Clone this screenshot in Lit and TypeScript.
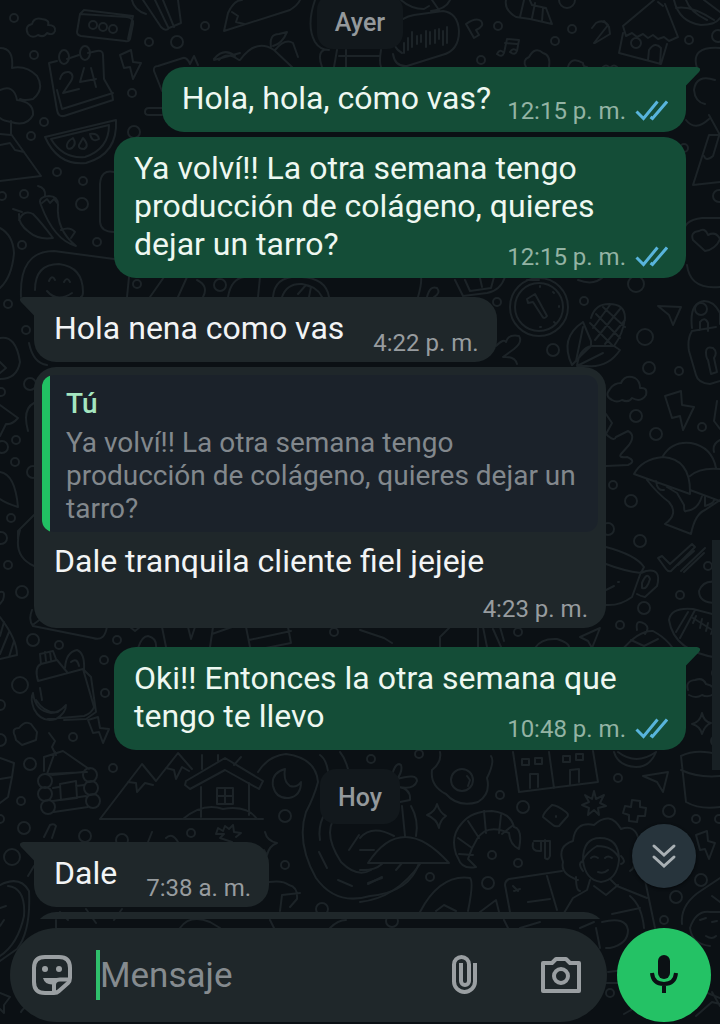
import { LitElement, html, svg, css, nothing } from "lit";
import { customElement, property } from "lit/decorators.js";

interface Message {
  id: string;
  kind: "msg";
  from: "me" | "them";
  text: string;
  time: string;
  tail?: boolean;
  quote?: { author: string; text: string };
}
interface Day {
  id: string;
  kind: "day";
  label: string;
}

const FEED: (Message | Day)[] = [
  { id: "d1", kind: "day", label: "Ayer" },
  { id: "m1", kind: "msg", from: "me", text: "Hola, hola, cómo vas?", time: "12:15 p. m.", tail: true },
  {
    id: "m2",
    kind: "msg",
    from: "me",
    text: "Ya volví!! La otra semana tengo producción de colágeno, quieres dejar un tarro?",
    time: "12:15 p. m.",
  },
  { id: "m3", kind: "msg", from: "them", text: "Hola nena como vas", time: "4:22 p. m.", tail: true },
  {
    id: "m4",
    kind: "msg",
    from: "them",
    text: "Dale tranquila cliente fiel jejeje",
    time: "4:23 p. m.",
    quote: {
      author: "Tú",
      text: "Ya volví!! La otra semana tengo producción de colágeno, quieres dejar un tarro?",
    },
  },
  { id: "m5", kind: "msg", from: "me", text: "Oki!! Entonces la otra semana que tengo te llevo", time: "10:48 p. m.", tail: true },
  { id: "d2", kind: "day", label: "Hoy" },
  { id: "m6", kind: "msg", from: "them", text: "Dale", time: "7:38 a. m.", tail: true },
];

/* Small bubbles scattered between the doodles: x, y, radius. */
const DOTS: [number, number, number][] = [
  [14, 18, 4], [34, 55, 4], [149, 42, 4], [177, 42, 6], [205, 26, 4], [132, 93, 4], [44, 122, 4], [31, 136, 4],
  [134, 132, 6], [57, 172, 4], [83, 181, 4], [24, 194, 4], [82, 204, 6], [97, 242, 4], [22, 245, 4], [2, 196, 4],
  [498, 26, 4], [555, 41, 4], [572, 29, 4], [481, 60, 4], [567, 0, 8], [689, 40, 4], [718, 36, 6], [684, 148, 4],
  [719, 196, 6], [636, 284, 8], [497, 302, 4], [584, 301, 4], [553, 350, 6], [701, 309, 6], [645, 337, 8], [649, 368, 6],
  [679, 371, 4], [636, 416, 6], [656, 434, 6], [702, 427, 4], [613, 485, 4], [631, 501, 6], [608, 529, 6], [8, 304, 4],
  [26, 330, 4], [30, 384, 6], [1, 392, 4], [16, 440, 4], [2, 447, 6], [15, 462, 4], [33, 472, 6], [11, 518, 4],
  [1, 538, 6], [8, 565, 4], [22, 592, 6], [33, 640, 6], [59, 645, 4], [117, 640, 4], [104, 660, 4], [20, 685, 8],
  [105, 693, 4], [0, 705, 5], [73, 737, 4], [30, 764, 6], [113, 768, 4], [0, 740, 6], [137, 284, 4], [220, 285, 6],
  [640, 541, 6], [708, 566, 4], [680, 595, 4], [644, 608, 6], [620, 625, 4], [518, 632, 4], [334, 632, 4], [717, 673, 5],
  [716, 741, 5], [618, 778, 4], [419, 754, 4], [371, 759, 4], [500, 795, 4], [523, 807, 6], [669, 811, 6], [696, 819, 4],
  [719, 819, 4], [21, 801, 4], [24, 828, 6], [12, 857, 8], [85, 836, 6], [122, 840, 6], [191, 833, 4], [285, 816, 6],
  [285, 865, 4], [322, 909, 6], [492, 855, 4], [518, 863, 4], [488, 883, 6], [430, 877, 4], [701, 880, 6], [676, 897, 6],
  [664, 920, 4], [610, 993, 4], [392, 921, 6], [0, 819, 4],
];

/* Line doodles of the wallpaper. */
const STROKES: string[] = [
  // cloud, speech card
  "M28 34q-4-8 4-10q2-7 10-5q8 1 6 6q8 0 7 6q-2 5-8 2q-3 5-9 2q-6 4-10-1z",
  "M80 14l47 3q7 1 6 7l-3 15q-1 3-5 2l-44-5q-4-1-4-4zM80 14l4-4 49 6-5 23",
  "M89 25a4 4 0 1 0 8 0a4 4 0 1 0-8 0M99 27a4 4 0 1 0 8 0a4 4 0 1 0-8 0M109 29a4 4 0 1 0 8 0a4 4 0 1 0-8 0",
  // books and shoe
  "M132 0q2 10 14 14M143 0l18 27q5 5 8 1l12-5-3-23M155 0l13 27M163 0l11 27M224 31l4-18q6-13 14-13M224 31l66-21q8-5 10-10M232 12l6 4-2 6 8 2",
  // calendar
  "M57 61l-8 2 8 47q1 7 7 6l49-16-1-7-8-14-1-24q0-5-6-4l-9 2M67 59l12-4M57 90l5 19 51-16",
  "M59 57a5 7 0 1 0 10 0a5 7 0 1 0-10 0M80 53a5 7 0 1 0 10 0a5 7 0 1 0-10 0",
  "M60 79q2-8 9-7q7 3 0 12l-6 9 16-4M84 68l-4 14 16-3M91 68l5 19",
  // bolt
  "M120 55l11-5 2 12 8 1-8 16-3-12-6 1z",
  // flower, mountain
  "M0 48q14 0 12 20q14-3 25 8q8 13-4 23q-9 2-13 0M0 90q14-6 17 10q17 2 16 15q-6 12-22 7q-8-1-11-4M11 121v13l30 42-41 5M0 145l10-2 5 7 9 2M0 134l11 1",
  // melon slice
  "M45 137l71-17q2 34-30 43q-28 3-41-26zM51 139l58-14q0 24-24 32q-22 2-34-18",
  "M67 147q-1-5 6-9q4 6-1 10q-4 2-5-1M79 145l4-7q7 8 1 11q-6 0-5-4M90 134q8-1 9 5q-7 4-9-5",
  // chillies
  "M41 205q-4-8 8-9q9 0 9 9q-2 25 18 41q-22-6-35-41zM19 214q-1 10 10 18q9 8 24 6q-12-16-20-24q-9-5-14 6M13 209l9 3M38 186q8 2 7 10M42 203l5-4 3 4 4-4 4 5M61 230q9-4 14 2l-4 6",
  // card behind the messages
  "M114 172q-13-3-14 12v38q1 10 14 10",
  "M154 71q-1-5 4-5l25-8q4-1 7 6l4-8 4 9M154 71l8 20M163 108h-14q-4 0-4 4q0 3 4 3h13",
  // smiling blob
  "M21 297q-2-46 33-46l60 8M35 290q0-26 24-26q24 3 24 28q0 4-2 5M49 281q3-7 6-1M64 282q3-6 6 0M47 291q10 12 25 2M0 228q13 7 14 25q-2 24-14 35M127 297l2-20M150 297l14-20M178 297l9-20M197 280q12 6 6 17M228 297q3-18 16-20M258 297l2-20M273 297q2-22 28-20q25 1 28 20M282 297q5-14 20-13q15 2 20 13M298 294l8-9 5 2-2 10",
  // island
  "M214 60l26-7M219 60q8-9 20 0M240 60q16-22 34-10l18 17M271 47q-2-13 8-13l8-2q-5 12-14 14M275 50q10-12 18-7l5 14M214 59q10-12 21-3",
  // frame round the day label
  "M315 0q-9 26 0 42q5 8 14 8M322 67q-5-14 2-17M334 67l3-17M339 56h40M381 67q-2-5 0-17M346 50v17",
  // voice note
  "M402 53q-12-6-8-26q8-10 20-12l29-4q15 2 16 20q0 20-17 24l-35 11q-12 1-14-12M404 43v10M408 38v12M412 32v15M417 36v8M421 35v7M426 31v16M430 32v12M435 30v13M439 29v10M443 31v14M447 27v16M401 0q10 9 23 9l5-3M431 11q15-2 19-11M432 0l7 10",
  // music and key icons
  "M466 24l8 14 5-3-3-5q9-4 5-9q-5-4-15 3zM592 28l4-5q7-4 12 2l-14 18M604 21l5 6 1 7-15 9M497 54q3-6 7-1q-2 5-7 1M510 52q3-5 7-1q-2 5-7 1M504 53l3-14 12 1-2 11M505 43l12 1",
  "M506 0q-2 10 10 17l14 2 22 5-6-16-14-3-4-9M520 17l4-17M532 18l3-15M542 21l1-13",
  // shop
  "M623 26l31-26M623 26l3 10 6-3 5 4 6-3 5 4 5-3 5 4 6-2 5 4 9-4-13-33M623 33l-4 20 42 11 6-20M631 43a5 5 0 1 0 10 0a5 5 0 1 0-10 0M648 60l1-10q6-9 12-2l-1 16M658 2l5 4",
  "M674 0q5 22 27 25q15 0 19-7M676 8q15-3 38 12M686 0q4 12 21 20M704 0l16 12",
  // clouds on the right
  "M526 67q-4-7 3-10q6-11 14-4q8 2 6 14M568 67q3-11 15-4q0 4 4 4M603 67q3-3 6 0M611 67q3-3 6 0",
  "M697 68q-7-22 23-20M715 80q-19-6-21 10q1 12 11 14M686 120q9 12 23-1M709 115l11 20h-11l-16 50 27-3M704 156q2 6 9 0l6-20M684 235q-2-15 18-17l18 0M687 265q3 25 33 22M693 240q-3-8 6-9q6-4 9 4q8-4 12 4q-4 10-15 12z",
  // things under the second message
  "M418 297q4-14 3-20M427 297q3-12 10-9q4 5-3 9M455 280l8 16 24-3q13-2 18-16M465 280l5 11 21-3 3-11M480 278l2 9M515 277q17-5 35 0M527 280h12M578 280q16 6 25-3",
  // clock
  "M510 307a29 29 0 1 0 58 0a29 29 0 1 0-58 0M515 307a24 24 0 1 0 48 0a24 24 0 1 0-48 0M527 299l8-5 12 22q-3 4-5 0l-9-14-5 1zM540 286v1M553 292l1 1M559 306v1M554 322l1 1M540 327h1",
  // corn
  "M591 341l-8-19q-24 16-11 43q8-9 19-19zM577 366q2-17 14-20h23l6 4q-12 18-33 16zM577 366l26-13M576 361l7-34M591 318q4-14 18-14q16 0 16 14q-2 16-11 28M596 314l24 24M603 307l22 20M590 323l22 22M610 305l-17 23M620 309l-25 31M625 320l-20 24",
  // paper plane, padlock
  "M658 306l23 1-8 18-4-10z",
  "M692 328q-3-25 12-27q10 0 16 12v11M700 330v-8q5-6 8 1v8M692 331l24-4M692 331q-5 8-3 20l7 24q2 8 14 9l10-3M706 352q0-6 7-4q5 4 1 10l3 14-6 2-3-14q-2-2-2-8",
  // leaves beside the replies
  "M496 346q8-8 10-4q2-8 13-6q4 6-5 13l-11 8q12-1 14 7M606 414l6 9-6 11M606 434q8 8 10 3l12-6q8 4 1 14l-8 9q-3 4 6 3q10 4 1 8l-22 1",
  // cloud, bolt
  "M612 400q-8-4-2-11q4-6 11-6q4-9 14-5q5 3 5 10q8-1 6 7q-5 8-14 3q-3 5-10 2q-5 3-10 0z",
  "M665 396l16-5 1 14 12 2-11 23-3-14-8 2z",
  "M717 401l-3 20 6 8M720 440q-8 4-6 12",
  // mushrooms
  "M634 474q8-15 29-17q28 2 27 37zM663 456q9-15 28-13q21 4 25 25M690 476q10-9 30-7M690 490l30 11M647 480q11 14 22 22q10 12-4 22l26 10q4-20 14-24l15-10M656 481q1 10 8 9M667 487l10 6 7 12q0 8 2 6q12-1 16-15M705 496v10q10-3 9-7",
  // cup
  "M606 547q30 8 38 20l-3 6q-17-2-35-9M641 573l5-2q16-3 11 15l-12 11q-5-1-8-3M642 583q5-12 8-4q-3 11-8 9zM606 605q14 1 26-8l9-25M618 582h1M606 590l8-4",
  // check marks
  "M658 558l4-2 8 8 22-20 3 3-24 24q-3 1-5-2zM678 565l16-14M681 571l24-23M684 572l20-19",
  // ball
  "M669 620q2-13 24-11l27 7M669 620q5 32 50 38M676 632l12-20M680 638l15-28M693 618l24 15M696 616l-3 7M702 619l-2 9M708 623l-2 8M714 626l-3 8M720 583q-16-5-21 8q0 12 17 12",
  "M580 637l20-9-8 20-4-7zM622 650q17-20 31-19l5 3q8 5 14 13M637 630q-2-12 8-6q5 4 0 10M631 640l13 6 14-7M535 648q6-10 22-9q13 4 12 9",
  // side doodles on the left
  "M0 338q16-3 20 24q-3 17-20 17M0 362l6 6-6 5M0 405l18 13q-6 7-12 6l-6 12M34 403q-12 6-6 28M29 343q4 20 18 22M0 472q15 2 18 35q-12-4-18-8M20 530q-8 26 14 36M34 515l-16 16v8M0 592q6-2 3 8l-3 4M0 617q17 22 17 38l-17 4M4 622l-4 14M9 632l-9 22M14 641l-5 16",
  "M32 610q-4 10 1 16l60 12q12 4 14-12M34 624l8-6M130 627l5 4 5-4M138 648q4-12 10-12q9 2 8 12M162 627l4 20M188 627l3 12 4-12M213 627l-3 20M212 634l20-7M246 627l4 20M249 640l42-9M288 627l3 16-41 8M360 630l24 8 8 5M440 647v-10l10-10M478 627v20M483 627l4 20M493 629l8 18M500 627l4 14",
  // jug with banana
  "M38 681l45-12 11 38q-2 6-10 9l-36 3M38 681q-4-14 3-17l16-4 10 12M41 664l-1-10 13-3 3 8M45 652l1 9M50 652l1 8M65 668q1-16 12-18q8 3 7 20M71 662q6-5 8 4M83 669l8 8 5 35-10 7-22 1M33 693q2 18 18 20q8 0 15-8q0 8-10 14q-15 4-22-10q-4-10-1-16zM36 700q9 14 22 12M42 700l-2-12",
  "M15 736q-4-8 4-8q6-8 12-4l6 8-1 8-14 5-6-5zM88 720l10-3 2 11 9 1-6 14-4-11-6 1zM49 733l6 8-3 6 4 8",
  // log cabin
  "M44 757l19-6 26 18M44 757v14M55 752l-8 22 40-2M38 781a7 7 0 1 0 14 0a7 7 0 1 0-14 0M38 794a7 7 0 1 0 14 0a7 7 0 1 0-14 0M41 807a7 7 0 1 0 14 0a7 7 0 1 0-14 0M83 775a7 7 0 1 0 14 0a7 7 0 1 0-14 0M84 788a7 7 0 1 0 14 0a7 7 0 1 0-14 0M86 801a7 7 0 1 0 14 0a7 7 0 1 0-14 0M52 775l31-3M53 788l6-1M53 801l33-5M60 784l16-3 1 17-16 2zM76 786l8-1M54 812l34-5",
  "M0 758l14 5-2 14-12 2M12 777l-4 20-8 6",
  // mountains and house
  "M100 819l42-55 14 17 22-28 14 16M100 819h163M128 782l8 1 1 9 8-9 8 2M166 768l8 2 2 9 6-12 7 4",
  "M186 781l39-23 38 23-4 8-34-19-35 19-5-4zM201 787v30M249 783v32M183 819q20-17 40-10q24-4 34 10M217 788h16v16h-16zM225 788v16M217 796h16M202 755v14M218 755v6",
  // moon
  "M285 769q-14 4-12 17q3 13 16 12q12-2 12-16q-4 6-11 4q-7-5-5-17zM258 772q10-16 28-18q30 4 32 28q-4 15-12 30q-10 30 10 66q20 28 54 18q40-4 49-33M341 812q-22 16 0 50q16 16 30 8M320 755q6 4 8 16M340 752q5 6 8 17M234 765l7-8",
  "M320 840q-2-12 3-23M319 852l8 16M338 880l14 6M368 883l14-5M349 850l10-15",
  // egg, rabbit, building
  "M432 770q10-8 8-18M432 770q-2 16 14 24q12 14 32 8q13-8 9-24q8-16 4-22M451 780a11 11 0 1 0 22 0a11 11 0 1 0-22 0M467 776l3 4-2 6M392 775q4-14 9-10q2 6-4 14q20-6 20 2q-3 9-18 6q12 2 11 13l-10 2M513 752l6 40 79-10-5-31M549 752l5 36M530 788v-14h8v13M570 784v-14l9-1v13M522 759h7v6h-7zM535 758h7v6h-7zM563 756h7v6h-7zM576 754h7v6h-7z",
  // basket plus jar on the right
  "M614 752q4 14 22 15q14 0 20-15M618 752q18 14 38 0M643 776l25-4-5 20-6-10zM681 756q16-8 39-1M681 756l5 46q14 8 34 5M681 770q17 8 39 6M688 690q-3-9 7-10q8-3 11 4q10 2 8 10q-6 4-12 1q-6 4-13 0M702 713q2 9 9 10q-6 2-9 11q-2-8-10-10q8-2 10-11",
  // umbrella, croissant
  "M368 863q34-52 81 0zM360 838q12-14 34-2M360 850h14M360 870q14 1 22-6M402 806l3 30M411 806q8 14 5 30M360 902q36-4 60-38M396 870l6-7M368 884l14-7",
  "M437 804q3 9 9 12q-6 4-7 12q-2-9-12-13q8-3 10-11z",
  "M456 854q-6-18 6-31q10-12 30-12q19 2 22 16q9 2 5 22q-9-4-10-16q-22-10-32 6q-6 10-9 20q4 4 8 8q-14 3-18-9zM468 821l11 17M484 811l2 22M501 815l-2 18M512 826l-10 8M458 838l14 10M459 854l14 1",
  // dice, star, cross, pilcrow
  "M552 805q5 0 14 7q4 3 0 6l-7 8q-4 1-6-1l-10-8q0-4 9-12M556 816v1",
  "M594 791l2 8 8-4-4 8 6 3-8 2 1 7-5-5-6 5 1-7-7-3 7-3-4-7 7 4z",
  "M632 800l8 1 0 6 6 1-1 8-7 0-1 6-8-1 0-6-6-2 2-7 6 1z",
  "M534 841h16v15q-2 5-5 2v-18M541 842v9q-10 1-8-8",
  // portrait
  "M578 880q-18-6-15-18q-6-16 10-21q2-20 21-16q16-15 27 4q15-5 18 12l-3 12M583 860q0-22 17-22q19 0 19 22q-2 20-18 22q-16-2-18-22zM583 860q4-8 14-14q16 0 22 12M591 858q3-3 7 0M605 858q3-3 7 0M598 872q6 2 10-2M621 856q6 6 0 8M583 871q-6-8 0-10M590 880l-3 10-14 8-12 20M611 880l6 6 30 12M594 886l12 9 12-10M645 880l10 48M630 896q12 10 14 32M612 914l28-6M596 928l4 20M602 922q24-6 26 8q0 14-18 18h-4M580 928l14-6M576 877q0 14 4 14M630 871q6-4 3-9",
  // bolt and balloon face
  "M696 835l11-4 1 10 7 2-6 16-4-10-5 1z",
  "M682 924q-2-20 20-34l18-12M690 928q6-18 20-16h10M690 928q2 16 20 18M700 920l6-2M712 922l5-1M706 936q6 4 10 0M712 896l8 6",
  // sails and board
  "M420 912q20-38 50-34q4 4-2 33M436 911l8-6 12 6M480 912l16-12 3 12M510 912l-5-27q0-4 4-6l53-8M547 876l10 34M514 891l6-2M513 886l5 5M528 902l22-3M504 920l4 8M520 928l20-6",
  // sparkles near the last bubble
  "M265 832q2 9 12 11q-8 3-10 12l-3-5M232 842l-12-4 4-4-8 0 2-6 5 3 2-5 4 3 4-4 1 7 7 1-5 4M44 837l6-12q4-2 6 1l-4 12M148 842l4-10M166 838q6-6 12 4",
  "M0 885q20-10 29 6q2 40-12 58l-17 12M8 886q18 2 16 30q-6 28-24 40M0 908l6-2M0 926l4-6M34 866l-6 10M0 993l10 4-6 8 0 8-4-4M21 1012q4-8 14-4M269 882q14-2 20 3q9 2 8 14l-7 8M300 893l-18 2-2 16M60 912l8 8M86 909l10 14M114 920l8-11M180 928q10-14 30-6l10 6M270 920l4 8M330 928q8-8 16-8M56 920v8",
  "M608 972l16-2M606 983h12M624 1014l14-8M700 990l20 8M696 1016l16-14 8 2M712 992l8 14",
];

@customElement("chat-wallpaper")
export class ChatWallpaper extends LitElement {
  static styles = css`
    :host {
      display: block;
      overflow: hidden;
    }
    .art {
      display: block;
      width: 100%;
      height: 100%;
      fill: none;
      stroke: #1c2327;
      stroke-width: 2;
      stroke-linecap: round;
      stroke-linejoin: round;
    }
  `;
  render() {
    return html`<svg class="art" viewBox="0 0 720 1024" preserveAspectRatio="xMidYMin slice" aria-hidden="true">
      ${DOTS.map(([x, y, r]) => svg`<circle cx=${x} cy=${y} r=${r}></circle>`)}
      ${STROKES.map((d) => svg`<path d=${d}></path>`)}
    </svg>`;
  }
}

@customElement("chat-bubble")
export class ChatBubble extends LitElement {
  @property({ attribute: false }) message!: Message;

  static styles = css`
    :host {
      display: flex;
    }
    .bubble {
      position: relative;
      display: flow-root;
      box-sizing: border-box;
      max-width: calc(100% - 80px);
      padding: 12px 18px 6px 20px;
      border-radius: 22px;
      font-size: 32px;
      line-height: 38px;
    }
    .me {
      margin-left: auto;
      background: #144d37;
      color: #eef8f1;
    }
    .them {
      padding-bottom: 4px;
      background: #1f272a;
      color: #f2f4f5;
    }
    .me.tailed {
      border-top-right-radius: 0;
    }
    .them.tailed {
      border-top-left-radius: 0;
    }
    .quoted {
      padding-top: 8px;
    }
    .tail {
      position: absolute;
      top: 0;
      width: 14px;
      height: 19px;
    }
    .me .tail {
      left: 100%;
      fill: #144d37;
    }
    .them .tail {
      right: 100%;
      fill: #1f272a;
      transform: scaleX(-1);
    }
    .quote {
      margin: 0 -10px 10px -12px;
      padding: 13px 16px 7px 24px;
      border-radius: 12px;
      background: linear-gradient(to right, #21c063 8px, #1b222a 8px);
      color: #82888d;
      font-size: 28px;
      line-height: 33px;
    }
    .author {
      display: block;
      margin-bottom: 6px;
      color: #a5e6c0;
      font-size: 28px;
      font-weight: 500;
      line-height: 32px;
    }
    .meta {
      float: right;
      display: flex;
      align-items: center;
      gap: 9px;
      margin: 17px 0 0 16px;
      font-size: 24px;
      line-height: 30px;
      white-space: nowrap;
    }
    .me .meta {
      color: #93b3a4;
    }
    .them .meta {
      margin: 19px 0 0 29px;
      color: #979c9f;
    }
    .quoted .meta {
      margin-top: 14px;
    }
    .ticks {
      width: 33px;
      height: 22px;
      fill: none;
      stroke: #58b4dc;
      stroke-width: 3;
    }
  `;

  render() {
    const m = this.message;
    const cls = ["bubble", m.from, m.tail ? "tailed" : "", m.quote ? "quoted" : ""].join(" ");
    return html`<article class=${cls}>
      ${m.tail
        ? html`<svg class="tail" viewBox="0 0 14 19" aria-hidden="true"><path d="M0 0H11Q16 1 13 5L0 18.500Z" /></svg>`
        : nothing}
      ${m.quote
        ? html`<div class="quote"><span class="author">${m.quote.author}</span>${m.quote.text}</div>`
        : nothing}<span>${m.text}</span
      ><span class="meta"
        ><time>${m.time}</time>${m.from === "me"
          ? html`<svg class="ticks" viewBox="0 0 33 22" role="img" aria-label="Leído">
              <path d="M1.500 11.500L8.500 18.500L22.500 1.500M15.500 17L17.500 18.500L32 1.500" />
            </svg>`
          : nothing}</span
      >
    </article>`;
  }
}

@customElement("message-composer")
export class MessageComposer extends LitElement {
  static styles = css`
    :host {
      display: flex;
      gap: 10px;
      padding: 9px 9px 2px 10px;
    }
    .field {
      flex: 1;
      display: flex;
      align-items: center;
      min-width: 0;
      height: 94px;
      box-sizing: border-box;
      padding: 0 24px 0 20px;
      border-radius: 47px;
      background: #1f272a;
    }
    button {
      display: grid;
      place-items: center;
      flex: none;
      padding: 0;
      border: 0;
      background: none;
      color: #9a9fa2;
      cursor: pointer;
    }
    .tool {
      width: 44px;
      height: 60px;
    }
    .tool + .tool {
      margin-left: 53px;
    }
    .icon {
      width: 44px;
      height: 44px;
      fill: none;
      stroke: currentColor;
      stroke-width: 4;
    }
    .text {
      flex: 1;
      min-width: 0;
      height: 50px;
      margin-left: 22px;
      padding: 0;
      border: 0;
      border-left: 4px solid #2fbf6b;
      outline: 0;
      background: none;
      color: #f2f4f5;
      font: 35px Roboto, sans-serif;
    }
    .text::placeholder {
      color: #858b8f;
      opacity: 1;
    }
    .mic {
      width: 94px;
      height: 94px;
      border-radius: 50%;
      background: #24c265;
      color: #0b1014;
    }
    .solid {
      fill: currentColor;
      stroke: none;
    }
  `;
  render() {
    return html`
      <div class="field">
        <button class="tool" aria-label="Stickers">
          <svg class="icon" viewBox="0 0 44 44">
            <path d="M15 4H29Q40 4 40 15V25Q40 28 38 30L29 38Q27 40 24 40H15Q4 40 4 29V15Q4 4 15 4Z" />
            <path d="M24 39V32Q24 26.500 30 26.500H39" />
            <circle class="solid" cx="15" cy="16" r="3" />
            <circle class="solid" cx="29" cy="16" r="3" />
            <path class="solid" d="M13 25H29Q25 31 23 31.500Q15 32 13 25Z" />
          </svg>
        </button>
        <input class="text" type="text" aria-label="Mensaje" placeholder="Mensaje" />
        <button class="tool" aria-label="Adjuntar">
          <svg class="icon" viewBox="0 0 44 44">
            <path d="M33 10V28.500A10.500 10.500 0 0 1 12 28.500V11.500A7.500 7.500 0 0 1 27 11.500V28A4 4 0 0 1 19 28V10" />
          </svg>
        </button>
        <button class="tool" aria-label="Cámara">
          <svg class="icon" viewBox="0 0 44 44" stroke-linejoin="round">
            <path d="M4 10H13L17 6H27L31 10H40V38H4Z" />
            <circle cx="22" cy="23" r="7" />
          </svg>
        </button>
      </div>
      <button class="mic" aria-label="Mensaje de voz">
        <svg class="icon" viewBox="0 0 44 44">
          <rect class="solid" x="16" y="2" width="12" height="24" rx="6" />
          <path d="M10 20Q11 31 22 31Q33 31 34 20M22 31V40" stroke-linecap="butt" />
        </svg>
      </button>
    `;
  }
}

@customElement("app-root")
export class AppRoot extends LitElement {
  static styles = css`
    :host {
      position: relative;
      display: flex;
      flex-direction: column;
      height: 100vh;
      overflow: hidden;
      background: #0b1014;
      font-family: Roboto, sans-serif;
    }
    .wallpaper {
      position: absolute;
      inset: 0;
    }
    .feed {
      position: relative;
      flex: 1;
      min-height: 0;
      overflow: hidden;
    }
    .list {
      display: flex;
      flex-direction: column;
      gap: 5px;
      margin-top: -6px;
      padding: 0 34px;
    }
    .day {
      align-self: center;
      margin: 0 0 13px;
      padding: 14px 18px 11px;
      border-radius: 16px;
      background: #12181c;
      color: #94999c;
      font-size: 25px;
      font-weight: 500;
      line-height: 30px;
    }
    .turn {
      margin-top: 14px;
    }
    .upcoming {
      width: calc(100% - 80px);
      height: 120px;
      border-radius: 22px;
      background: #1f272a;
    }
    .down {
      position: absolute;
      right: 24px;
      bottom: 31px;
      display: grid;
      place-items: center;
      width: 64px;
      height: 64px;
      padding: 0;
      border: 0;
      border-radius: 50%;
      background: #27343c;
      box-shadow: 0 1px 3px #05080a;
      cursor: pointer;
    }
    .chevrons {
      width: 28px;
      height: 28px;
      fill: none;
      stroke: #a9b0b4;
      stroke-width: 3;
      stroke-linecap: round;
    }
    .thumb {
      position: absolute;
      top: 540px;
      right: 0;
      width: 8px;
      height: 230px;
      background: #182024;
    }
    .composer {
      position: relative;
    }
  `;

  render() {
    return html`
      <chat-wallpaper class="wallpaper"></chat-wallpaper>
      <main class="feed">
        <div class="list">
          ${FEED.map((item, i) => {
            const prev = FEED[i - 1];
            const changed =
              prev?.kind === "msg" && (item.kind === "day" || item.from !== prev.from);
            if (item.kind === "day") {
              return html`<div class="day ${changed ? "turn" : ""}">${item.label}</div>`;
            }
            return html`<chat-bubble class=${changed ? "turn" : ""} .message=${item}></chat-bubble>`;
          })}
          <div class="upcoming"></div>
        </div>
        <div class="thumb"></div>
        <button class="down" aria-label="Ir al final">
          <svg class="chevrons" viewBox="0 0 28 28"><path d="M4 4L14 13L24 4M4 15L14 24L24 15" /></svg>
        </button>
      </main>
      <message-composer class="composer"></message-composer>
    `;
  }
}
